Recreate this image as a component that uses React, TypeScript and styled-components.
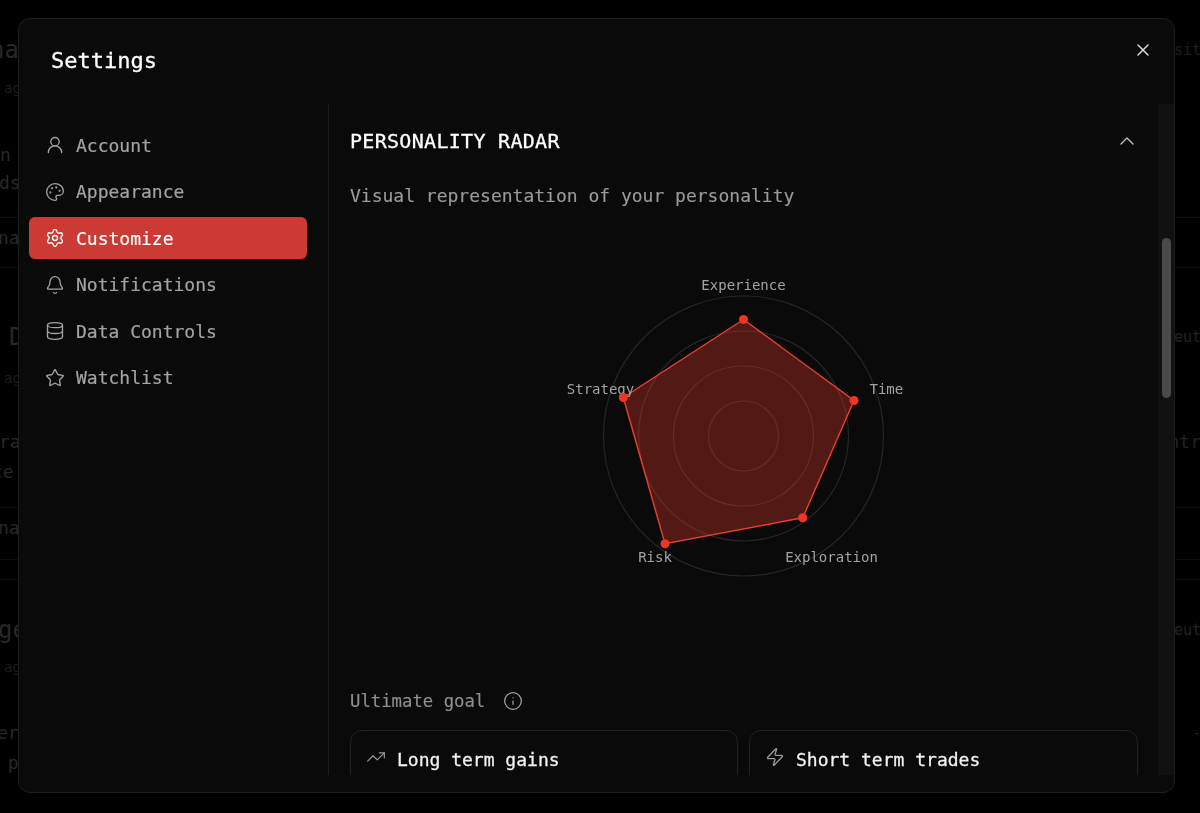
import styled, { createGlobalStyle } from 'styled-components';
import { Bell, ChevronUp, Database, Info, Palette, Settings, Star, TrendingUp, UserRound, X, Zap } from 'lucide-react';

const mono = '"DejaVu Sans Mono", "Liberation Mono", monospace';

const GlobalStyle = createGlobalStyle`
  html, body {
    margin: 0;
    background: #000;
    font-family: ${mono};
  }
`;

// dim page behind the dialog: only the bits sticking out at both sides are visible
const backRows = [
  { h: 34 },
  { h: 32, left: 'na', size: 24, offset: -10, right: 'osit', rightSize: 15, rightColor: '#18211a' },
  { h: 44, left: 'ago', size: 14, offset: 4, faint: true },
  { h: 30 },
  { h: 30, left: 'n :', size: 18, offset: 0 },
  { h: 26, left: 'ds,', size: 18, offset: -1 },
  { h: 22, rule: true },
  { h: 40, left: 'nat', size: 18, offset: -2 },
  { h: 10, rule: true },
  { h: 52 },
  { h: 34, left: 'D', size: 24, offset: 9, right: 'leut', rightSize: 15 },
  { h: 48, left: 'ago', size: 14, offset: 4, faint: true },
  { h: 25 },
  { h: 30, left: 'ral', size: 18, offset: -1, right: 'ntr', rightSize: 18 },
  { h: 30, left: 'ce', size: 18, offset: -8 },
  { h: 21, rule: true },
  { h: 40, left: 'nat', size: 18, offset: -2 },
  { h: 12, rule: true },
  { h: 20, rule: true },
  { h: 32 },
  { h: 36, left: 'ge', size: 24, offset: -2, right: 'leut', rightSize: 15 },
  { h: 38, left: 'ago', size: 14, offset: 4, faint: true },
  { h: 32 },
  { h: 30, left: 'ere', size: 18, offset: -3, right: '-', rightSize: 14 },
  { h: 30, left: ' pu', size: 18, offset: -3 },
];

const navItems = [
  { label: 'Account', Icon: UserRound },
  { label: 'Appearance', Icon: Palette },
  { label: 'Customize', Icon: Settings, active: true },
  { label: 'Notifications', Icon: Bell },
  { label: 'Data Controls', Icon: Database },
  { label: 'Watchlist', Icon: Star },
];

const radarPoints = [
  { x: 243.5, y: 83.5 },
  { x: 354, y: 164.5 },
  { x: 302.7, y: 281.8 },
  { x: 165, y: 307.8 },
  { x: 123.3, y: 161.5 },
];

const radarLabels = [
  { text: 'Experience', x: 243.5, y: 48.5, anchor: 'middle' },
  { text: 'Time', x: 369.5, y: 152.5, anchor: 'start' },
  { text: 'Exploration', x: 331.5, y: 320.5, anchor: 'middle' },
  { text: 'Risk', x: 155, y: 320.5, anchor: 'middle' },
  { text: 'Strategy', x: 100.5, y: 152.5, anchor: 'middle' },
];

const App = () => {
  return (
    <>
      <GlobalStyle />
      <Backdrop>
        {backRows.map((row, i) => (
          <BackRow key={i} $h={row.h} $rule={row.rule}>
            <BackLeft $size={row.size} $offset={row.offset} $faint={row.faint}>{row.left}</BackLeft>
            <BackRight $size={row.rightSize} $color={row.rightColor}>{row.right}</BackRight>
          </BackRow>
        ))}
      </Backdrop>
      <Modal>
        <ModalHeader>
          <Title>Settings</Title>
          <CloseButton><X size={20} strokeWidth={1.8} /></CloseButton>
        </ModalHeader>
        <ModalBody>
          <Sidebar>
            {navItems.map(({ label, Icon, active }) => (
              <NavItem key={label} $active={active}>
                <Icon size={20} strokeWidth={1.6} />
                <span>{label}</span>
              </NavItem>
            ))}
          </Sidebar>
          <Main>
            <Content>
              <SectionHeader>
                <SectionTitle>PERSONALITY RADAR</SectionTitle>
                <ChevronSlot><ChevronUp size={24} strokeWidth={1.3} /></ChevronSlot>
              </SectionHeader>
              <Subtitle>Visual representation of your personality</Subtitle>
              <ChartWrap>
                <RadarSvg viewBox="0 0 488 400" width="488" height="400">
                  {[35, 70, 105, 140].map((r) => (
                    <circle key={r} cx="243.5" cy="200" r={r} fill="none" stroke="#262626" strokeWidth="1.2" />
                  ))}
                  <polygon
                    points={radarPoints.map((p) => `${p.x},${p.y}`).join(' ')}
                    fill="#ef3a2a"
                    fillOpacity="0.32"
                    stroke="#e8402f"
                    strokeWidth="1.4"
                  />
                  {radarLabels.map((l) => (
                    <RadarLabel key={l.text} x={l.x} y={l.y} textAnchor={l.anchor} dominantBaseline="central">{l.text}</RadarLabel>
                  ))}
                  {radarPoints.map((p, i) => (
                    <circle key={i} cx={p.x} cy={p.y} r="4.5" fill="#f03428" />
                  ))}
                </RadarSvg>
              </ChartWrap>
              <GoalLabel>
                <span>Ultimate goal</span>
                <Info size={20} strokeWidth={1.5} />
              </GoalLabel>
              <GoalGrid>
                <GoalCard>
                  <TrendingUp size={20} strokeWidth={1.4} />
                  <GoalName>Long term gains</GoalName>
                </GoalCard>
                <GoalCard>
                  <Zap size={20} strokeWidth={1.6} />
                  <GoalName>Short term trades</GoalName>
                </GoalCard>
              </GoalGrid>
            </Content>
            <Track><Thumb /></Track>
          </Main>
        </ModalBody>
      </Modal>
    </>
  );
};

const Backdrop = styled.div`
  width: 1200px;
  height: 813px;
  overflow: hidden;
`;
const BackRow = styled.div<{ $h: number; $rule?: boolean }>`
  box-sizing: border-box;
  height: ${(p) => p.$h}px;
  display: flex;
  align-items: center;
  justify-content: space-between;
  white-space: pre;
  border-bottom: 1px solid ${(p) => (p.$rule ? '#0c0c0c' : 'transparent')};
`;
const BackLeft = styled.span<{ $size?: number; $offset?: number; $faint?: boolean }>`
  font-size: ${(p) => p.$size ?? 14}px;
  margin-left: ${(p) => p.$offset ?? 0}px;
  color: ${(p) => (p.$faint ? '#1c1c1c' : '#282828')};
`;
const BackRight = styled.span<{ $size?: number; $color?: string }>`
  font-size: ${(p) => p.$size ?? 14}px;
  margin-right: -1px;
  color: ${(p) => p.$color ?? '#222'};
`;
const Modal = styled.div`
  position: fixed;
  left: 18px;
  top: 18px;
  box-sizing: border-box;
  width: 1157px;
  height: 775px;
  display: flex;
  flex-direction: column;
  background: #0a0a0b;
  border: 1px solid #1d1d1d;
  border-radius: 12px;
  overflow: hidden;
`;
const ModalHeader = styled.div`
  flex: none;
  height: 85px;
  box-sizing: border-box;
  padding: 28px 21px 0 32px;
  display: flex;
  align-items: flex-start;
  justify-content: space-between;
`;
const Title = styled.div`
  font-size: 22px;
  line-height: 28px;
  color: #fff;
  -webkit-text-stroke: 0.3px #fff;
`;
const CloseButton = styled.div`
  display: flex;
  margin-top: -7px;
  color: #d8d8d8;
`;
const ModalBody = styled.div`
  flex: none;
  height: 671px;
  display: flex;
`;
const Sidebar = styled.div`
  flex: none;
  box-sizing: border-box;
  width: 310px;
  padding: 20px 21px 0 10px;
  display: flex;
  flex-direction: column;
  gap: 4.5px;
  border-right: 1px solid #1d1d1d;
`;
const NavItem = styled.div<{ $active?: boolean }>`
  height: 42px;
  box-sizing: border-box;
  padding-left: 16px;
  display: flex;
  align-items: center;
  gap: 11px;
  flex: none;
  border-radius: 6px;
  font-size: 18px;
  -webkit-text-stroke: 0.2px currentColor;
  color: ${(p) => (p.$active ? '#fff' : '#a3a3a3')};
  background: ${(p) => (p.$active ? '#cb3a33' : 'transparent')};
`;
const Main = styled.div`
  flex: 1;
  min-width: 0;
  display: flex;
`;
const Content = styled.div`
  flex: 1;
  min-width: 0;
  overflow: hidden;
  padding: 23px 20px 0 21px;
`;
const SectionHeader = styled.div`
  height: 28px;
  display: flex;
  align-items: center;
  justify-content: space-between;
`;
const SectionTitle = styled.div`
  font-size: 20px;
  letter-spacing: 0.3px;
  color: #fff;
  -webkit-text-stroke: 0.3px #fff;
`;
const ChevronSlot = styled.div`
  display: flex;
  margin-right: -1px;
  color: #c4c4c4;
`;
const Subtitle = styled.div`
  margin-top: 27px;
  font-size: 18px;
  line-height: 28px;
  color: #9a9a9a;
  -webkit-text-stroke: 0.15px currentColor;
`;
const ChartWrap = styled.div`
  margin-top: 25.5px;
  height: 400px;
  display: flex;
  justify-content: center;
`;
const RadarSvg = styled.svg`
  flex: none;
`;
const RadarLabel = styled.text`
  font-family: ${mono};
  font-size: 14px;
  fill: #a3a3a3;
`;
const GoalLabel = styled.div`
  margin-top: 53.5px;
  height: 24px;
  display: flex;
  align-items: center;
  gap: 18px;
  font-size: 17.3px;
  color: #8f8f8f;
  -webkit-text-stroke: 0.15px currentColor;
  svg {
    color: #a3a3a3;
  }
`;
const GoalGrid = styled.div`
  margin-top: 17px;
  display: grid;
  grid-template-columns: 388px 389px;
  gap: 11px;
`;
const GoalCard = styled.div`
  height: 80px;
  box-sizing: border-box;
  padding: 17px 15px 0;
  display: flex;
  align-items: flex-start;
  gap: 11px;
  border: 1px solid #222;
  border-radius: 12px;
  svg {
    margin-top: -1px;
    color: #9a9a9a;
  }
`;
const GoalName = styled.div`
  font-size: 18px;
  line-height: 22px;
  margin-top: 0.5px;
  color: #f2f2f2;
  -webkit-text-stroke: 0.3px currentColor;
`;
const Track = styled.div`
  flex: none;
  width: 16px;
  box-sizing: border-box;
  padding-top: 134px;
  display: flex;
  justify-content: center;
  align-items: flex-start;
  background: #111;
`;
const Thumb = styled.div`
  width: 9px;
  height: 160px;
  border-radius: 5px;
  background: #4a4a4a;
`;

export default App;
